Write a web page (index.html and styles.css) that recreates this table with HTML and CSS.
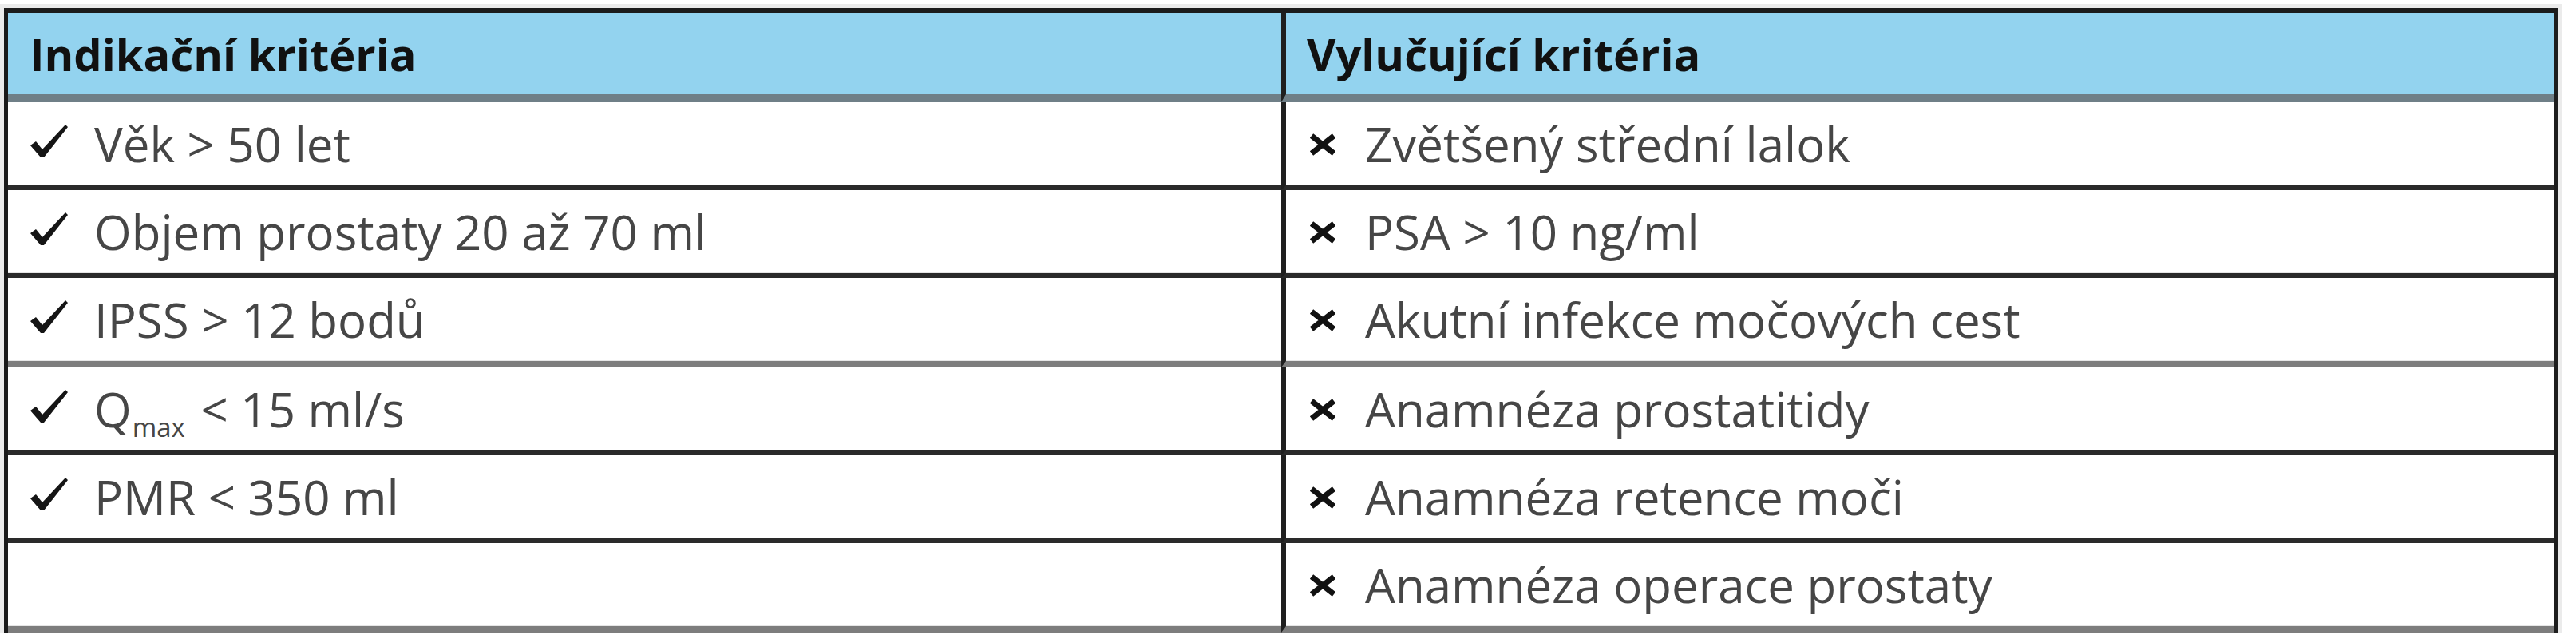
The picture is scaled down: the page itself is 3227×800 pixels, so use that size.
FILE: index.html
```html
<!DOCTYPE html>
<html lang="cs">
<head>
<meta charset="utf-8">
<title>Kritéria</title>
<link rel="stylesheet" href="styles.css">
</head>
<body>
<div class="crit">
  <div class="cell head">Indikační kritéria</div>
  <div class="cell head right">Vylučující kritéria</div>

  <div class="cell yes"><svg class="chk" viewBox="0 0 48 42"><polygon points="0,26 7,21 15,31 44,0 47,3 17,41 13,41"/></svg><span>Věk &gt; 50 let</span></div>
  <div class="cell no right"><svg class="x" viewBox="0 0 38 28"><path d="M5 3 L33 25 M33 3 L5 25"/></svg><span>Zvětšený střední lalok</span></div>

  <div class="cell yes"><svg class="chk" viewBox="0 0 48 42"><polygon points="0,26 7,21 15,31 44,0 47,3 17,41 13,41"/></svg><span>Objem prostaty 20 až 70 ml</span></div>
  <div class="cell no right"><svg class="x" viewBox="0 0 38 28"><path d="M5 3 L33 25 M33 3 L5 25"/></svg><span>PSA &gt; 10 ng/ml</span></div>

  <div class="cell yes soft"><svg class="chk" viewBox="0 0 48 42"><polygon points="0,26 7,21 15,31 44,0 47,3 17,41 13,41"/></svg><span>IPSS &gt; 12 bodů</span></div>
  <div class="cell no right soft"><svg class="x" viewBox="0 0 38 28"><path d="M5 3 L33 25 M33 3 L5 25"/></svg><span>Akutní infekce močových cest</span></div>

  <div class="cell yes"><svg class="chk" viewBox="0 0 48 42"><polygon points="0,26 7,21 15,31 44,0 47,3 17,41 13,41"/></svg><span>Q<sub>max</sub> &lt; 15 ml/s</span></div>
  <div class="cell no right"><svg class="x" viewBox="0 0 38 28"><path d="M5 3 L33 25 M33 3 L5 25"/></svg><span>Anamnéza prostatitidy</span></div>

  <div class="cell yes"><svg class="chk" viewBox="0 0 48 42"><polygon points="0,26 7,21 15,31 44,0 47,3 17,41 13,41"/></svg><span>PMR &lt; 350 ml</span></div>
  <div class="cell no right"><svg class="x" viewBox="0 0 38 28"><path d="M5 3 L33 25 M33 3 L5 25"/></svg><span>Anamnéza retence moči</span></div>

  <div class="cell yes soft"></div>
  <div class="cell no right soft"><svg class="x" viewBox="0 0 38 28"><path d="M5 3 L33 25 M33 3 L5 25"/></svg><span>Anamnéza operace prostaty</span></div>
</div>
</body>
</html>
```
FILE: styles.css
```css
html, body {
  margin: 0;
  padding: 0;
  background: #ffffff;
}

body {
  font-family: "Open Sans", "Noto Sans", sans-serif;
}

.crit {
  display: grid;
  grid-template-columns: 1595px 1595px;
  width: max-content;
  margin: 10px 0 0 5px;
  border-top: 6px solid #1c1c1c;
  border-left: 5px solid #1a1a1a;
  border-right: 5px solid #1e1e1e;
  box-shadow: 0 0 0 5px #ebebeb;
}

.cell {
  display: flex;
  align-items: center;
  box-sizing: border-box;
  height: 110px;
  border-bottom: 6px solid #2a2a2a;
  box-shadow: inset 0 -1px 0 #e6e6e6;
  background: #ffffff;
  color: #464646;
  font-size: 60px;
  line-height: normal;
  white-space: nowrap;
}

.cell.soft {
  height: 112px;
  border-bottom: 8px solid #7d7d7d;
}

.cell.right {
  border-left: 6px solid #1f1f1f;
}

.head {
  height: 112px;
  background: #93d3ef;
  color: #111111;
  font-weight: 700;
  font-size: 56px;
  padding-left: 27px;
  border-bottom: 10px solid #6f7f87;
  box-shadow: none;
}

.head.right {
  padding-left: 26px;
}

.yes {
  padding-left: 28px;
}

.no {
  padding-left: 27px;
}

.chk {
  width: 48px;
  height: 42px;
  margin-right: 32px;
  margin-top: -6px;
  fill: #151515;
  flex: none;
}

.x {
  width: 38px;
  height: 28px;
  margin-right: 34px;
  margin-top: 2px;
  flex: none;
  stroke: #111111;
  stroke-width: 7;
  stroke-linecap: butt;
  fill: none;
}

sub {
  font-size: 0.55em;
  vertical-align: -0.36em;
  line-height: 0;
  margin-left: 1px;
  margin-right: 4px;
}
```
